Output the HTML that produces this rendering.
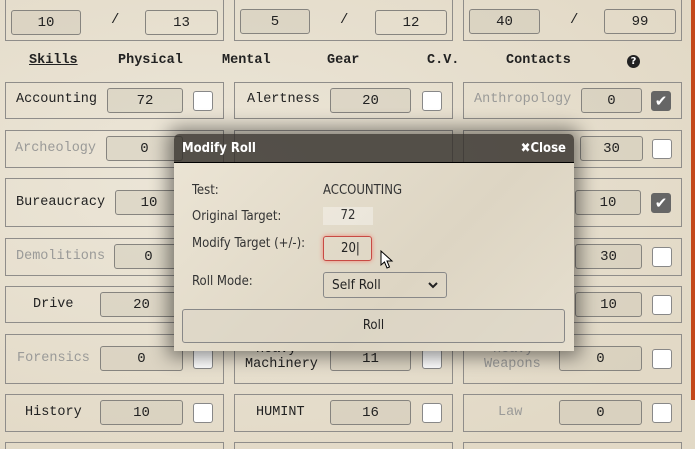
<!DOCTYPE html>
<html style="overflow:hidden;width:695px;height:449px"><head><meta charset="utf-8"><style>
*{box-sizing:border-box;margin:0;padding:0}
body{width:695px;height:449px;overflow:hidden;position:relative;background:#e9e2d3;font-family:"Liberation Mono",monospace;color:#222;font-size:13px}
.bg{position:absolute;inset:0;background:radial-gradient(ellipse at 30% 40%,#ece6d8,#e2d9c6 80%)}
.bar{position:absolute;right:0;top:0;width:4px;height:400px;background:#c4481a}
.box{position:absolute;border:1px solid #8f8d8a}
.in{position:absolute;border:1px solid #86847f;border-radius:3px;background:rgba(200,194,178,.35);text-align:center;font-size:14px;line-height:24px}
.cb{position:absolute;width:20px;height:20px;border:1px solid #888;border-radius:3px;background:#fff}
.cb.on{background:#666;border-color:#666;color:#fff;font-size:15px;text-align:center;line-height:19px;font-family:"DejaVu Sans",sans-serif}
.lbl{position:absolute;font-size:13.5px;text-align:center}
.dim{color:#9a9a98}
.h{position:absolute;top:53px;font-weight:bold;font-size:13.5px}
.sep{position:absolute;font-size:14px}
.dlg{position:absolute;left:174px;top:134px;width:400px;height:217px;box-shadow:0 0 18px 6px rgba(0,0,0,.45);border-radius:5px 5px 0 0;overflow:hidden;font-family:"DejaVu Sans Condensed","DejaVu Sans",sans-serif}
.dh{height:29px;background:rgba(50,46,42,.82);color:#fff;font-weight:bold;font-size:13px;line-height:29px;padding-left:8px;border-bottom:1px solid #000;position:relative}
.db{position:absolute;top:29px;left:0;right:0;bottom:0;background:linear-gradient(135deg,#ebe4d4,#ddd5c3 60%,#e6dfcf)}
.dl{position:absolute;left:18px;font-size:13px;color:#333}
</style></head><body>
<div class="bg"></div>
<div class="bar"></div>
<div class="box" style="left:5px;top:-6px;width:219px;height:47px"></div>
<div class="box" style="left:234px;top:-6px;width:219px;height:47px"></div>
<div class="box" style="left:463px;top:-6px;width:219px;height:47px"></div>
<div class="in" style="left:11px;top:10px;width:70px;height:25px">10</div><div class="sep" style="left:111px;top:12px">/</div><div class="in" style="left:145px;top:10px;width:73px;height:25px;background:none">13</div>
<div class="in" style="left:240px;top:9px;width:70px;height:25px">5</div><div class="sep" style="left:340px;top:12px">/</div><div class="in" style="left:375px;top:10px;width:72px;height:25px;background:none">12</div>
<div class="in" style="left:469px;top:9px;width:71px;height:25px">40</div><div class="sep" style="left:570px;top:12px">/</div><div class="in" style="left:604px;top:9px;width:72px;height:25px;background:none">99</div>
<div class="h" style="left:29px;text-decoration:underline">Skills</div>
<div class="h" style="left:118px">Physical</div>
<div class="h" style="left:222px">Mental</div>
<div class="h" style="left:327px">Gear</div>
<div class="h" style="left:427px">C.V.</div>
<div class="h" style="left:506px">Contacts</div>
<div style="position:absolute;left:627px;top:55px;width:13px;height:13px;border-radius:50%;background:#222;color:#fff;font:bold 10px 'DejaVu Sans';text-align:center;line-height:13px">?</div>

<div class="box" style="left:5px;top:82px;width:219px;height:37px"></div>
<div class="lbl" style="left:16px;top:92px">Accounting</div><div class="in" style="left:107px;top:88px;width:76px;height:25px">72</div><div class="cb" style="left:193px;top:91px"></div>
<div class="box" style="left:5px;top:130px;width:219px;height:38px"></div>
<div class="lbl dim" style="left:15px;top:141px">Archeology</div><div class="in" style="left:106px;top:136px;width:77px;height:25px">0</div>
<div class="box" style="left:5px;top:178px;width:219px;height:49px"></div>
<div class="lbl" style="left:16px;top:195px">Bureaucracy</div><div class="in" style="left:115px;top:190px;width:68px;height:25px">10</div>
<div class="box" style="left:5px;top:238px;width:219px;height:38px"></div>
<div class="lbl dim" style="left:16px;top:249px">Demolitions</div><div class="in" style="left:114px;top:244px;width:69px;height:25px">0</div>
<div class="box" style="left:5px;top:286px;width:219px;height:37px"></div>
<div class="lbl" style="left:33px;top:297px">Drive</div><div class="in" style="left:100px;top:292px;width:83px;height:25px">20</div>
<div class="box" style="left:5px;top:334px;width:219px;height:50px"></div>
<div class="lbl dim" style="left:17px;top:351px">Forensics</div><div class="in" style="left:100px;top:346px;width:83px;height:25px">0</div><div class="cb" style="left:193px;top:349px"></div>
<div class="box" style="left:5px;top:394px;width:219px;height:38px"></div>
<div class="lbl" style="left:25px;top:405px">History</div><div class="in" style="left:100px;top:400px;width:83px;height:25px">10</div><div class="cb" style="left:193px;top:403px"></div>
<div class="box" style="left:5px;top:442px;width:219px;height:20px"></div>

<div class="box" style="left:234px;top:82px;width:219px;height:37px"></div>
<div class="lbl" style="left:247px;top:92px">Alertness</div><div class="in" style="left:330px;top:88px;width:81px;height:25px">20</div><div class="cb" style="left:422px;top:91px"></div>
<div class="box" style="left:234px;top:130px;width:219px;height:38px"></div>
<div class="box" style="left:234px;top:334px;width:219px;height:50px"></div>
<div class="lbl" style="left:256px;top:342px">Heavy</div>
<div class="lbl" style="left:245px;top:357px">Machinery</div><div class="in" style="left:330px;top:346px;width:81px;height:25px">11</div><div class="cb" style="left:422px;top:349px"></div>
<div class="box" style="left:234px;top:394px;width:219px;height:38px"></div>
<div class="lbl" style="left:256px;top:405px">HUMINT</div><div class="in" style="left:330px;top:400px;width:81px;height:25px">16</div><div class="cb" style="left:422px;top:403px"></div>
<div class="box" style="left:234px;top:442px;width:219px;height:20px"></div>

<div class="box" style="left:463px;top:82px;width:219px;height:37px"></div>
<div class="lbl dim" style="left:474px;top:92px">Anthropology</div><div class="in" style="left:581px;top:88px;width:61px;height:25px">0</div><div class="cb on" style="left:651px;top:91px">✔</div>
<div class="box" style="left:463px;top:130px;width:219px;height:38px"></div>
<div class="in" style="left:580px;top:136px;width:63px;height:25px">30</div><div class="cb" style="left:652px;top:139px"></div>
<div class="box" style="left:463px;top:178px;width:219px;height:49px"></div>
<div class="in" style="left:575px;top:190px;width:66px;height:25px">10</div><div class="cb on" style="left:651px;top:193px">✔</div>
<div class="box" style="left:463px;top:238px;width:219px;height:38px"></div>
<div class="in" style="left:575px;top:244px;width:67px;height:25px">30</div><div class="cb" style="left:652px;top:247px"></div>
<div class="box" style="left:463px;top:286px;width:219px;height:37px"></div>
<div class="in" style="left:575px;top:292px;width:67px;height:25px">10</div><div class="cb" style="left:652px;top:295px"></div>
<div class="box" style="left:463px;top:334px;width:219px;height:50px"></div>
<div class="lbl dim" style="left:493px;top:342px">Heavy</div>
<div class="lbl dim" style="left:484px;top:357px">Weapons</div><div class="in" style="left:559px;top:346px;width:83px;height:25px">0</div><div class="cb" style="left:652px;top:349px"></div>
<div class="box" style="left:463px;top:394px;width:219px;height:38px"></div>
<div class="lbl dim" style="left:498px;top:405px">Law</div><div class="in" style="left:559px;top:400px;width:83px;height:25px">0</div><div class="cb" style="left:652px;top:403px"></div>
<div class="box" style="left:463px;top:442px;width:219px;height:20px"></div>

<div class="dlg">
 <div class="db">
  <div class="dl" style="top:20px">Test:</div>
  <div style="position:absolute;left:149px;top:20px;font-size:13px;color:#333">ACCOUNTING</div>
  <div class="dl" style="top:46px">Original Target:</div>
  <div style="position:absolute;left:149px;top:44px;width:50px;height:18px;background:rgba(255,255,255,.35);font-size:13px;text-align:center;line-height:18px;color:#333">72</div>
  <div class="dl" style="top:73px">Modify Target (+/-):</div>
  <div style="position:absolute;left:149px;top:73px;width:49px;height:25px;border:1px solid #c84a44;border-radius:3px;box-shadow:0 0 5px #e87;font-size:13px;line-height:23px;padding-left:17px;color:#222">20|</div>
  <div class="dl" style="top:111px">Roll Mode:</div>
  <div style="position:absolute;left:149px;top:109px;width:124px;height:26px;border:1px solid #888;border-radius:3px;font-size:13.5px;line-height:24px;padding-left:8px;color:#222">Self Roll<svg style="position:absolute;right:8px;top:9px" width="10" height="7"><path d="M1 1 L5 5 L9 1" fill="none" stroke="#222" stroke-width="2"/></svg></div>
  <div style="position:absolute;left:8px;top:146px;width:383px;height:34px;border:1px solid #888;border-radius:3px;background:rgba(220,214,198,.6);text-align:center;line-height:32px;font-size:13px;color:#222">Roll</div>
 </div>
 <div class="dh">Modify Roll<span style="position:absolute;right:8px;top:0">✖Close</span></div>
</div>
<svg style="position:absolute;left:380px;top:250px" width="14" height="20"><path d="M1 1 L1 15 L4.5 12 L7 18 L9.5 17 L7 11 L12 11 Z" fill="#fff" stroke="#000" stroke-width="1"/></svg>
</body></html>
